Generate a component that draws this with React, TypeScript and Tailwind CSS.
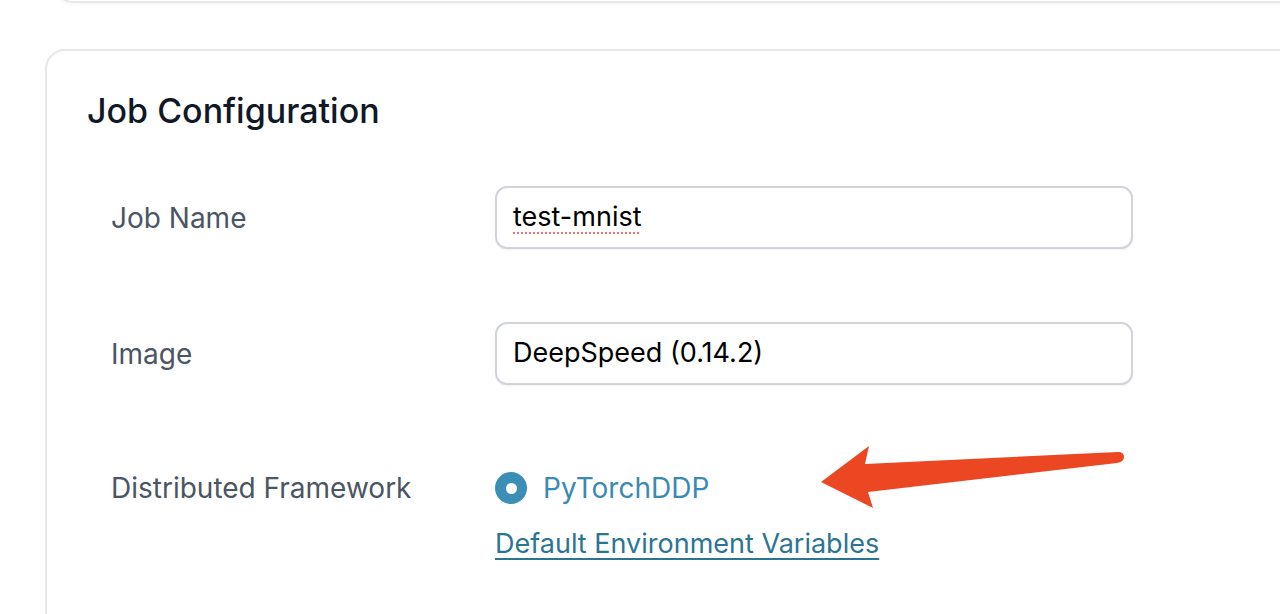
import React from "react";

const FormRow = ({ label, children, className = "" }) => (
  <div className={`grid grid-cols-[384px_638px] items-center ${className}`}>
    <span className="text-[28px] text-[#4b5563]">{label}</span>
    {children}
  </div>
);

const FakeInput = ({ children }) => (
  <div className="h-[63px] flex items-center px-[16px] border-2 border-[#d1d5db] rounded-[12px] bg-white text-[27px] text-black shadow-[0_1px_2px_rgba(0,0,0,0.06)]">
    {children}
  </div>
);

const RedArrow = () => (
  <svg
    className="absolute left-0 top-0 pointer-events-none"
    width="1280"
    height="614"
    viewBox="0 0 1280 614"
  >
    <path
      d="M821 482 L869 446 L865 464 L1118 452 Q1124 452 1124 457 Q1124 462 1117 463 L868 492 L873 508 Z"
      fill="#ec4723"
      strokeLinejoin="round"
    />
  </svg>
);

export default function App() {
  return (
    <div className="relative w-[1280px] h-[614px] overflow-hidden bg-white font-['Inter',sans-serif]">
      {/* previous card, only its bottom edge shows */}
      <div className="ml-[53px] w-[1300px] -mt-[40px] h-[43px] border-2 border-[#e5e7eb] rounded-[20px] shadow-[0_2px_4px_rgba(0,0,0,0.03)]" />

      <div className="ml-[45px] w-[1300px] mt-[46px] h-[700px] border-2 border-[#e5e7eb] rounded-[20px] pl-[40px] pt-[37px]">
        <h2 className="text-[34px] font-medium text-[#111827] leading-[46px]">
          Job Configuration
        </h2>

        <div className="pl-[24px] mt-[52px]">
          <FormRow label="Job Name">
            <FakeInput>
              <span className="underline decoration-dotted decoration-[#f87171] decoration-2 underline-offset-[6px]">
                test-mnist
              </span>
            </FakeInput>
          </FormRow>

          <FormRow label="Image" className="mt-[73px]">
            <FakeInput>DeepSpeed (0.14.2)</FakeInput>
          </FormRow>

          <FormRow label="Distributed Framework" className="mt-[82px]">
            <label className="flex items-center gap-[16px]">
              <span className="w-[32px] h-[32px] rounded-full bg-[#3b8fb6] flex items-center justify-center">
                <span className="w-[11px] h-[11px] rounded-full bg-white" />
              </span>
              <span className="text-[28px] text-[#3a8ab3]">PyTorchDDP</span>
            </label>
          </FormRow>

          <div className="grid grid-cols-[384px_638px] mt-[15px]">
            <span />
            <a className="text-[27px] text-[#2c7592] underline underline-offset-[5px] decoration-2">
              Default Environment Variables
            </a>
          </div>
        </div>
      </div>

      <RedArrow />
    </div>
  );
}
